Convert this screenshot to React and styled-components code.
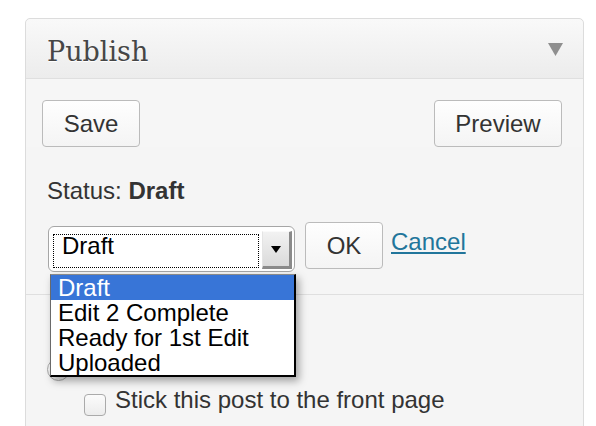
import React from 'react';
import styled, { createGlobalStyle } from 'styled-components';

const GlobalStyle = createGlobalStyle`
  html, body {
    margin: 0;
    padding: 0;
    background: #fff;
    overflow: hidden;
  }
  body {
    font-family: "Liberation Sans", Arial, sans-serif;
    color: #333;
  }
`;

const Page = styled.div`
  padding: 18px 12px 0 25px;
  height: 426px;
  box-sizing: border-box;
`;

const Panel = styled.div`
  width: 559px;
  min-height: 440px;
  box-sizing: border-box;
  border: 1px solid #dcdcdc;
  border-radius: 5px;
  background: #f5f5f5;
`;

const Header = styled.div`
  display: flex;
  align-items: flex-start;
  justify-content: space-between;
  height: 60px;
  box-sizing: border-box;
  padding: 18px 20px 0 21px;
  border-bottom: 1px solid #dfdfdf;
  border-radius: 5px 5px 0 0;
  background: linear-gradient(to bottom, #f9f9f9, #ececec);
`;

const Title = styled.h3`
  margin: 0;
  font-family: "DejaVu Serif", Georgia, serif;
  font-weight: normal;
  font-size: 27px;
  line-height: 30px;
  color: #464646;
  text-shadow: 0 1px 0 #fff;
`;

const Toggle = styled.svg`
  margin-top: 6px;
`;

const MajorActions = styled.div`
  display: flex;
  justify-content: space-between;
  padding: 21px 21px 0 16px;
  background: #f6f6f6;
`;

const Button = styled.button`
  box-sizing: border-box;
  height: 47px;
  width: ${(p) => p.$width}px;
  padding: 0;
  border: 1px solid #bbb;
  border-radius: 4px;
  background: linear-gradient(to bottom, #fefefe, #f4f4f4);
  font-family: "Liberation Sans", Arial, sans-serif;
  font-size: 24px;
  line-height: 45px;
  color: #333;
  flex-shrink: 0;
`;

const Section = styled.div`
  padding: ${(p) => p.$pad};
  border-bottom: ${(p) => (p.$divider ? '1px solid #dfdfdf' : 'none')};
`;

const Line = styled.div`
  font-size: 24px;
  line-height: 28px;
  color: #333;
  b {
    font-weight: bold;
  }
`;

const SelectRow = styled.div`
  display: flex;
  align-items: flex-start;
  margin-top: 17px;
`;

const SelectWrap = styled.div`
  position: relative;
  margin: 4px 0 0 1px;
`;

const SelectBox = styled.div`
  display: flex;
  align-items: flex-start;
  box-sizing: border-box;
  width: 247px;
  height: 46px;
  padding: 6px 2px 0 4px;
  border: 1px solid #a6a6a6;
  border-radius: 6px;
  background: #fff;
`;

const SelectValue = styled.div`
  flex: 1;
  box-sizing: border-box;
  height: 34px;
  margin-top: 1px;
  padding-left: 8px;
  border: 1px dotted #000;
  font-size: 24px;
  line-height: 22px;
  color: #000;
`;

const ArrowButton = styled.div`
  display: flex;
  align-items: center;
  justify-content: center;
  box-sizing: border-box;
  width: 30px;
  height: 38px;
  margin: -2px 0 0 3px;
  border-top: 1px solid #fafafa;
  border-left: 1px solid #e4e4e4;
  border-right: 3px solid #8a8a8a;
  border-bottom: 3px solid #8a8a8a;
  background: linear-gradient(to bottom, #f2f2f2, #dadada);
  &::after {
    content: '';
    width: 0;
    height: 0;
    border-left: 5px solid transparent;
    border-right: 5px solid transparent;
    border-top: 7px solid #000;
  }
`;

const Menu = styled.ul`
  position: absolute;
  left: 2px;
  top: 48px;
  z-index: 5;
  margin: 0;
  padding: 0;
  list-style: none;
  width: 246px;
  box-sizing: border-box;
  background: #fff;
  border-top: 1px solid #8a8a8a;
  border-left: 1px solid #6a6a6a;
  border-right: 2px solid #000;
  border-bottom: 2px solid #000;
  box-shadow: 3px 4px 8px rgba(0, 0, 0, 0.35);
`;

const Option = styled.li`
  padding-left: 7px;
  font-size: 24px;
  line-height: 25px;
  color: ${(p) => (p.$active ? '#fff' : '#000')};
  background: ${(p) => (p.$active ? '#3875d7' : 'transparent')};
`;

const OkButton = styled(Button)`
  margin-left: 10px;
`;

const CancelLink = styled.a`
  margin-left: 8px;
  font-size: 24px;
  line-height: 40px;
  color: #21759b;
  text-decoration: underline;
`;

const RadioRow = styled.div`
  display: flex;
  margin-top: ${(p) => p.$top}px;
`;

const Radio = styled.span`
  flex-shrink: 0;
  width: 23px;
  height: 23px;
  box-sizing: border-box;
  border: 1px solid #a8a8a8;
  border-radius: 50%;
  background: linear-gradient(to bottom, #fdfdfd, #ededed);
`;

const CheckRow = styled.label`
  display: flex;
  align-items: flex-start;
  gap: 9px;
  margin-top: 5px;
  padding-left: 37px;
  font-size: 24px;
  line-height: 28px;
  color: #333;
`;

const Checkbox = styled.span`
  flex-shrink: 0;
  width: 22px;
  height: 22px;
  margin-top: 8px;
  box-sizing: border-box;
  border: 1px solid #aaa;
  border-radius: 4px;
  background: linear-gradient(to bottom, #fbfbfb, #ececec);
`;

const statuses = ['Draft', 'Edit 2 Complete', 'Ready for 1st Edit', 'Uploaded'];

export default function App() {
  return (
    <>
      <GlobalStyle />
      <Page>
        <Panel>
          <Header>
            <Title>Publish</Title>
            <Toggle width="15" height="13" viewBox="0 0 15 13">
              <polygon points="0,0 15,0 7.5,13" fill="#8f8f8f" />
            </Toggle>
          </Header>

          <MajorActions>
            <Button $width={98}>Save</Button>
            <Button $width={128}>Preview</Button>
          </MajorActions>

          <Section $pad="30px 21px 22px 21px" $divider>
            <Line>
              Status: <b>Draft</b>
            </Line>
            <SelectRow>
              <SelectWrap>
                <SelectBox>
                  <SelectValue>Draft</SelectValue>
                  <ArrowButton />
                </SelectBox>
                <Menu>
                  {statuses.map((s, i) => (
                    <Option key={s} $active={i === 0}>
                      {s}
                    </Option>
                  ))}
                </Menu>
              </SelectWrap>
              <OkButton $width={78}>OK</OkButton>
              <CancelLink href="#">Cancel</CancelLink>
            </SelectRow>
          </Section>

          <Section $pad="0 21px 0 21px">
            <RadioRow $top={63}>
              <Radio />
            </RadioRow>
            <CheckRow>
              <Checkbox />
              Stick this post to the front page
            </CheckRow>
            <RadioRow $top={10}>
              <Radio />
            </RadioRow>
          </Section>
        </Panel>
      </Page>
    </>
  );
}
